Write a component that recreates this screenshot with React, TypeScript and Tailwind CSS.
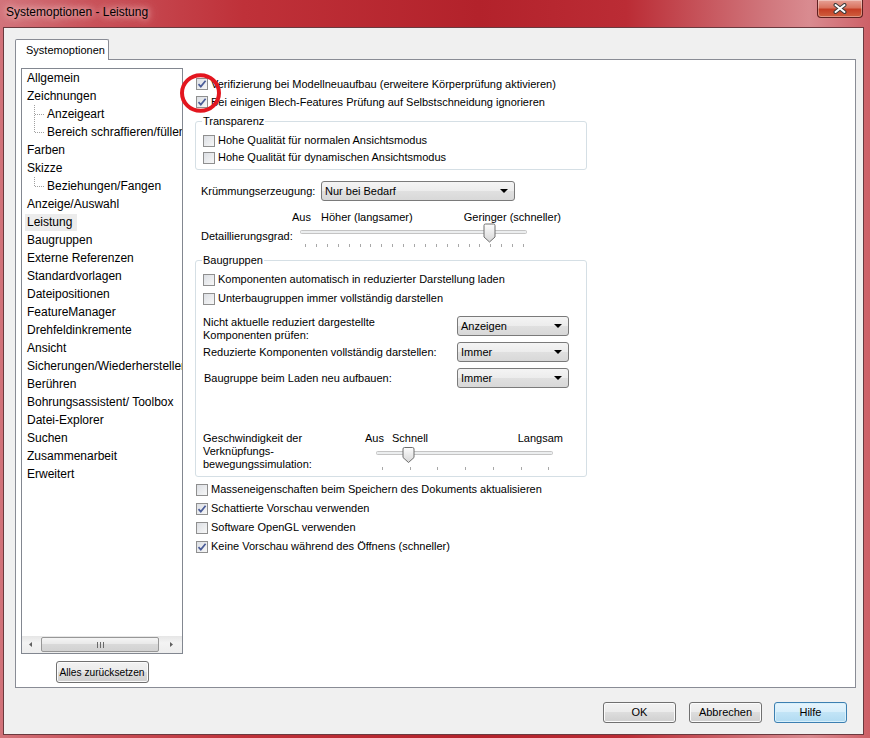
import clsx from 'clsx'

type TreeItem = { label: string; child?: 'mid' | 'last'; selected?: boolean }

const tree: TreeItem[] = [
  { label: 'Allgemein' },
  { label: 'Zeichnungen' },
  { label: 'Anzeigeart', child: 'mid' },
  { label: 'Bereich schraffieren/füllen', child: 'last' },
  { label: 'Farben' },
  { label: 'Skizze' },
  { label: 'Beziehungen/Fangen', child: 'last' },
  { label: 'Anzeige/Auswahl' },
  { label: 'Leistung', selected: true },
  { label: 'Baugruppen' },
  { label: 'Externe Referenzen' },
  { label: 'Standardvorlagen' },
  { label: 'Dateipositionen' },
  { label: 'FeatureManager' },
  { label: 'Drehfeldinkremente' },
  { label: 'Ansicht' },
  { label: 'Sicherungen/Wiederherstellen' },
  { label: 'Berühren' },
  { label: 'Bohrungsassistent/ Toolbox' },
  { label: 'Datei-Explorer' },
  { label: 'Suchen' },
  { label: 'Zusammenarbeit' },
  { label: 'Erweitert' },
]

function Box({ checked }: { checked?: boolean }) {
  return (
    <span className="flex h-[12px] w-[12px] shrink-0 items-center justify-center border border-[#8f8f8f] bg-[linear-gradient(135deg,#dcdfe4,#f7f7f7)]">
      {checked && (
        <svg width="10" height="10" viewBox="0 0 10 10">
          <path d="M1.5 5.2 L3.8 7.6 L8.6 1.8" fill="none" stroke="#4a5c98" strokeWidth="1.7" />
        </svg>
      )}
    </span>
  )
}

function Check({
  label,
  checked,
  className,
}: {
  label: string
  checked?: boolean
  className?: string
}) {
  return (
    <div className={clsx('flex items-center', className)}>
      <Box checked={checked} />
      <span className="ml-[3px] whitespace-nowrap">{label}</span>
    </div>
  )
}

function Arrow() {
  return (
    <svg width="8" height="4" viewBox="0 0 8 4" className="shrink-0">
      <path d="M0 0H8L4 4Z" fill="#000" />
    </svg>
  )
}

function Combo({ value, className }: { value: string; className?: string }) {
  return (
    <div
      className={clsx(
        'flex h-[20px] shrink-0 items-center justify-between rounded-[3px] border border-[#7a7a7a] bg-[linear-gradient(#f4f4f4,#ececec_50%,#e0e0e0_50%,#d8d8d8)] pl-[3px] pr-[6px]',
        className,
      )}
    >
      <span>{value}</span>
      <Arrow />
    </div>
  )
}

function Button({
  children,
  primary,
  className,
}: {
  children: React.ReactNode
  primary?: boolean
  className?: string
}) {
  return (
    <div
      className={clsx(
        'flex items-center justify-center rounded-[3px] border',
        primary
          ? 'border-[#3c7fb1] bg-[linear-gradient(#e6f4fc,#d6eefb_50%,#c2e4f6_50%,#b1dbf2)] shadow-[inset_0_0_0_1px_#d8f0fb]'
          : 'border-[#707070] bg-[linear-gradient(#f2f2f2,#ebebeb_50%,#dddddd_50%,#cfcfcf)] shadow-[inset_0_0_0_1px_#fbfbfb]',
        className,
      )}
    >
      {children}
    </div>
  )
}

// Trackbar drawn as svg: groove, tick marks, pointed thumb
function Slider({
  width,
  trackY,
  thumbX,
  thumbTop,
  thumbH,
  ticks,
  tickY,
}: {
  width: number
  trackY: number
  thumbX: number
  thumbTop: number
  thumbH: number
  ticks: number[]
  tickY: number
}) {
  const l = thumbX - 5.5
  const r = thumbX + 5.5
  const b = thumbTop + thumbH
  return (
    <svg width={width + 2} height="26" className="shrink-0">
      <defs>
        <linearGradient id="thumb" x1="0" y1="0" x2="0" y2="1">
          <stop offset="0" stopColor="#fdfdfd" />
          <stop offset="1" stopColor="#d6d6d6" />
        </linearGradient>
      </defs>
      <rect x="0.5" y={trackY - 1.5} width={width - 1} height="3" fill="#eceeef" stroke="#c4c4c4" rx="1" />
      {ticks.map((x) => (
        <rect key={x} x={Math.round(x)} y={tickY} width="1" height="3" fill="#a8a8a8" />
      ))}
      <path
        d={`M${l} ${thumbTop + 1.5} Q${l} ${thumbTop} ${l + 1.5} ${thumbTop} H${r - 1.5} Q${r} ${thumbTop} ${r} ${thumbTop + 1.5} V${b - 5} L${thumbX} ${b} L${l} ${b - 5} Z`}
        fill="url(#thumb)"
        stroke="#6f6f6f"
      />
    </svg>
  )
}

function Connector({ last }: { last?: boolean }) {
  return (
    <svg width="13" height="18" className="shrink-0">
      <line x1="2.5" y1="0" x2="2.5" y2={last ? 9 : 18} stroke="#a0a0a0" strokeDasharray="1 1" />
      <line x1="3" y1="9.5" x2="12" y2="9.5" stroke="#a0a0a0" strokeDasharray="1 1" />
    </svg>
  )
}

function TreeList() {
  return (
    <div className="flex h-[586px] w-[162px] flex-col border border-[#828790] bg-white">
      <div className="flex-1 overflow-hidden text-[12px] leading-[14px]">
        {tree.map((item) => (
          <div
            key={item.label}
            className={clsx('flex h-[18px] items-center whitespace-nowrap', item.child ? 'pl-[10px]' : 'pl-[3px]')}
          >
            {item.child && <Connector last={item.child === 'last'} />}
            <span
              className={clsx(
                'flex h-[17px] items-center pl-[2px] pr-[5px]',
                item.selected && 'bg-[#ececec]',
              )}
            >
              {item.label}
            </span>
          </div>
        ))}
      </div>
      {/* horizontal scrollbar */}
      <div className="flex h-[17px] items-center bg-[linear-gradient(#e6e6e6,#f3f3f3_40%,#ededed)]">
        <svg width="19" height="17" className="shrink-0">
          <path d="M10 6 L7 8.5 L10 11 Z" fill="#606060" />
        </svg>
        <div className="flex h-[15px] w-[118px] items-center justify-center gap-[2px] rounded-[2px] border border-[#979797] bg-[linear-gradient(#f5f5f5,#e8e8e8_50%,#d9d9d9_50%,#d2d2d2)]">
          <span className="h-[6px] w-px bg-[#6a6a6a]" />
          <span className="h-[6px] w-px bg-[#6a6a6a]" />
          <span className="h-[6px] w-px bg-[#6a6a6a]" />
        </div>
        <svg width="23" height="17" className="ml-auto shrink-0">
          <path d="M11 6 L14 8.5 L11 11 Z" fill="#606060" />
        </svg>
      </div>
    </div>
  )
}

function Group({
  title,
  children,
  className,
}: {
  title: string
  children: React.ReactNode
  className?: string
}) {
  return (
    <fieldset className={clsx('w-[392px] rounded-[3px] border border-[#d5dfe5] pl-[7px]', className)}>
      <legend className="-ml-[1px] px-[1px] leading-[13px]">{title}</legend>
      {children}
    </fieldset>
  )
}

const detailTicks = Array.from({ length: 21 }, (_, i) => 5 + i * 10.9)
const speedTicks = Array.from({ length: 7 }, (_, i) => 6 + i * 27.7)

function Settings() {
  return (
    <div className="relative ml-[12px] flex w-[400px] flex-col pt-[15px]">
      <Check className="ml-[1px] h-[18px]" checked label="Verifizierung bei Modellneuaufbau (erweitere Körperprüfung aktivieren)" />
      <Check className="ml-[1px] h-[18px]" checked label="Bei einigen Blech-Features Prüfung auf Selbstschneidung ignorieren" />

      {/* red annotation ring */}
      <svg width="42" height="41" className="absolute left-[-15px] top-[13px]">
        <ellipse cx="20.5" cy="20" rx="18.5" ry="17.8" fill="none" stroke="#e3161f" strokeWidth="4" />
      </svg>

      <Group title="Transparenz" className="mt-[4px] pb-[3px] pt-[4px]">
        <Check className="h-[17px]" label="Hohe Qualität für normalen Ansichtsmodus" />
        <Check className="h-[17px]" label="Hohe Qualität für dynamischen Ansichtsmodus" />
      </Group>

      <div className="mt-[11px] flex h-[20px] items-center pl-[6px]">
        <span className="w-[120px]">Krümmungserzeugung:</span>
        <Combo value="Nur bei Bedarf" className="w-[194px]" />
      </div>

      <div className="mt-[10px] flex h-[12px] w-[366px] items-center leading-[12px]">
        <span className="ml-[97px]">Aus</span>
        <span className="ml-[10px]">Höher (langsamer)</span>
        <span className="ml-auto">Geringer (schneller)</span>
      </div>
      <div className="flex h-[26px] items-start pl-[6px]">
        <span className="w-[99px] pt-[7px]">Detaillierungsgrad:</span>
        <Slider width={227} trackY={9} thumbX={189.5} thumbTop={1} thumbH={18} ticks={detailTicks} tickY={21} />
      </div>

      <Group title="Baugruppen" className="mt-[5px] pb-[5px] pt-[3px]">
        <Check className="h-[19px]" label="Komponenten automatisch in reduzierter Darstellung laden" />
        <Check className="h-[19px]" label="Unterbaugruppen immer vollständig darstellen" />

        <div className="mt-[8px] flex h-[26px] items-start">
          <span className="w-[254px]">
            Nicht aktuelle reduziert dargestellte
            <br />
            Komponenten prüfen:
          </span>
          <Combo value="Anzeigen" className="w-[112px]" />
        </div>
        <div className="flex h-[20px] items-center">
          <span className="w-[254px]">Reduzierte Komponenten vollständig darstellen:</span>
          <Combo value="Immer" className="w-[112px]" />
        </div>
        <div className="mt-[6px] flex h-[20px] items-center">
          <span className="w-[254px] pl-[1px]">Baugruppe beim Laden neu aufbauen:</span>
          <Combo value="Immer" className="w-[112px]" />
        </div>

        <div className="mt-[44px] flex">
          <span className="w-[162px]">
            Geschwindigkeit der
            <br />
            Verknüpfungs-
            <br />
            bewegungssimulation:
          </span>
          <div className="flex w-[198px] flex-col">
            <div className="flex h-[13px] items-center">
              <span>Aus</span>
              <span className="ml-[8px]">Schnell</span>
              <span className="ml-auto">Langsam</span>
            </div>
            <div className="ml-[11px]">
              <Slider width={177} trackY={8} thumbX={32.5} thumbTop={2.5} thumbH={15} ticks={speedTicks} tickY={22} />
            </div>
          </div>
        </div>
      </Group>

      <div className="mt-[3px] flex flex-col">
        <Check className="ml-[1px] h-[19px]" label="Masseneigenschaften beim Speichern des Dokuments aktualisieren" />
        <Check className="ml-[1px] h-[19px]" checked label="Schattierte Vorschau verwenden" />
        <Check className="ml-[1px] h-[19px]" label="Software OpenGL verwenden" />
        <Check className="ml-[1px] h-[19px]" checked label="Keine Vorschau während des Öffnens (schneller)" />
      </div>
    </div>
  )
}

function Panel() {
  return (
    <div className="flex h-[629px] w-[841px] border border-[#898c95] bg-white">
      <div className="flex flex-col items-center pl-[5px] pt-[8px]">
        <TreeList />
        <Button className="mt-[7px] h-[22px] w-[93px] text-[10.2px]">Alles zurücksetzen</Button>
      </div>
      <Settings />
    </div>
  )
}

function TitleBar() {
  return (
    <div className="flex h-[27px] shrink-0 items-start">
      <span className="pl-[6px] pt-[5px] text-[12px] leading-[14px] [text-shadow:0_0_6px_#f6dada,0_0_12px_#f0c8c8]">
        Systemoptionen - Leistung
      </span>
      <div className="ml-auto mr-[7px] flex h-[18px] w-[46px] items-center justify-center rounded-b-[4px] border border-t-0 border-[#5e2020] bg-[linear-gradient(#e7a197,#d9735f_45%,#c53d25_55%,#d0603f)] shadow-[inset_0_0_0_1px_rgba(255,255,255,0.35)]">
        <svg width="14" height="11" viewBox="0 0 14 11">
          <path d="M2.5 2 L11.5 9 M11.5 2 L2.5 9" stroke="#3b3b3b" strokeWidth="4" strokeLinecap="round" />
          <path d="M2.5 2 L11.5 9 M11.5 2 L2.5 9" stroke="#fff" strokeWidth="2" strokeLinecap="round" />
        </svg>
      </div>
    </div>
  )
}

export default function App() {
  return (
    <div className="flex h-[738px] w-[870px] flex-col overflow-hidden bg-[linear-gradient(90deg,#d2737a_0%,#c9525a_10%,#bf3139_28%,#b3222b_55%,#bb2c35_72%,#d0767c_88%,#d98b90_93%,#cd6067_100%)] font-['Liberation_Sans',Arial,sans-serif] text-[11px] leading-[13px] text-black">
      <TitleBar />
      <div className="flex min-h-0 flex-1 pb-[3px] pl-[3px] pr-[6px]">
        <div className="flex flex-1 flex-col border border-[#6a3a3f] bg-[#f0f0f0] pl-[11px] pt-[11px]">
          <div className="relative z-10 -mb-px flex h-[21px] w-[94px] items-center rounded-t-[2px] border border-b-0 border-[#898c95] bg-white pl-[10px]">
            Systemoptionen
          </div>
          <Panel />
          <div className="mt-[14px] flex justify-end gap-[12px] pr-[16px]">
            <Button className="mr-[1px] h-[21px] w-[73px]">OK</Button>
            <Button className="h-[21px] w-[73px]">Abbrechen</Button>
            <Button primary className="h-[21px] w-[73px]">
              Hilfe
            </Button>
          </div>
        </div>
      </div>
    </div>
  )
}
